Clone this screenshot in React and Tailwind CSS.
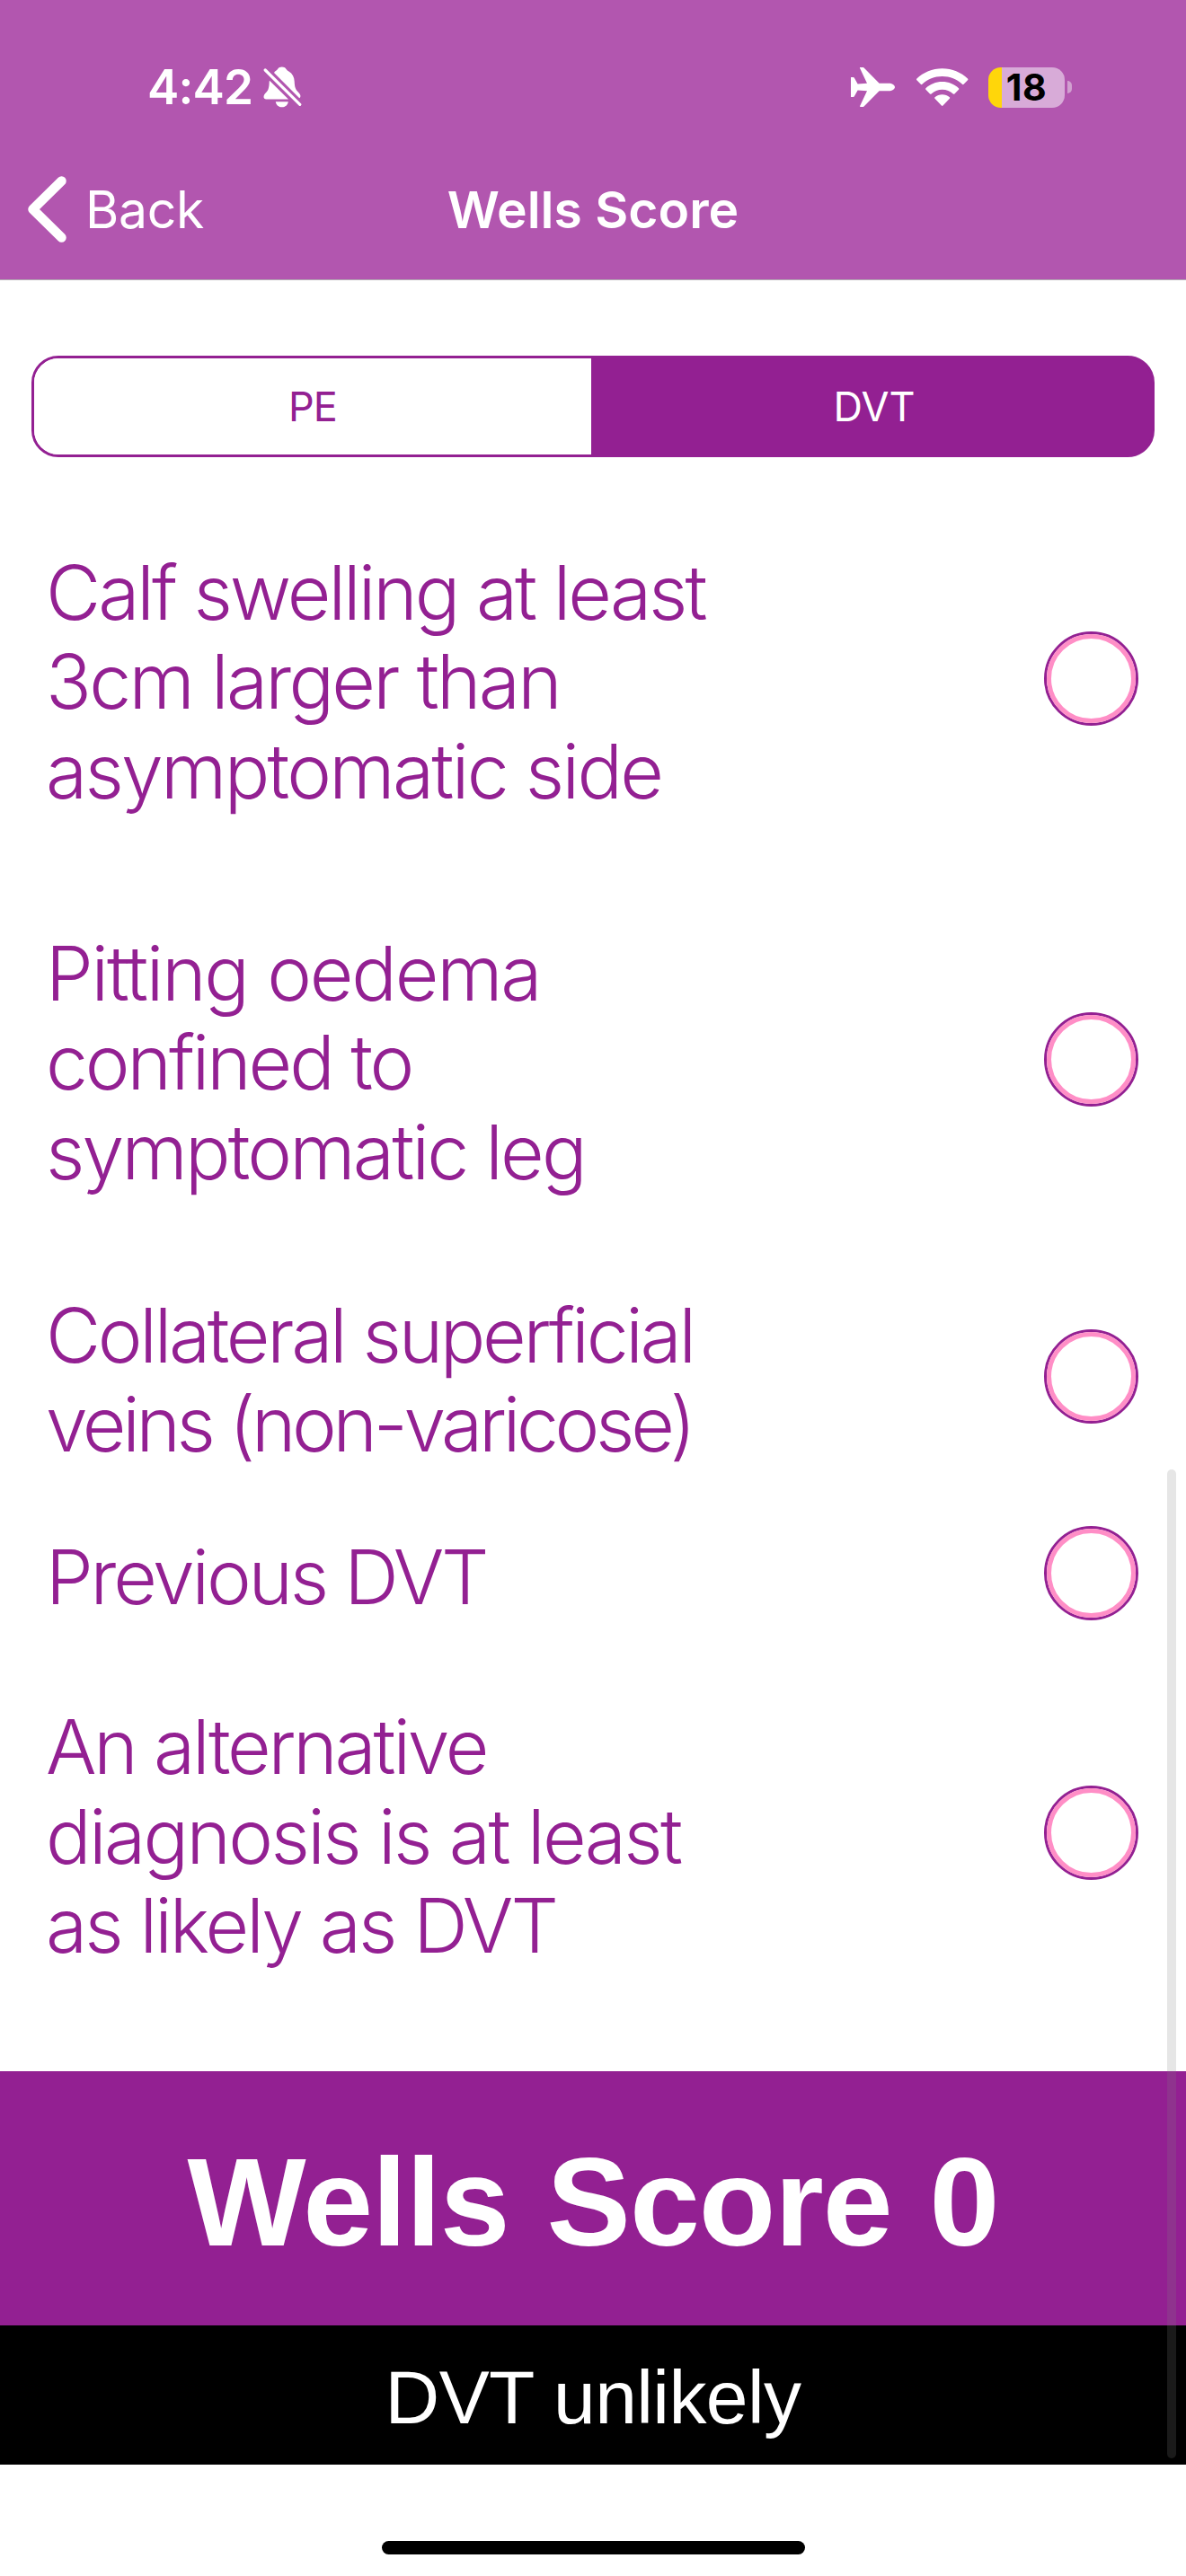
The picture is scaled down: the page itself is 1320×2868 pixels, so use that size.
const CRITERIA = [
  {
    height: "h-[424px]",
    lines: [
      { text: "Calf swelling at least", tracking: "tracking-[-3px]" },
      { text: "3cm larger than", tracking: "tracking-[-2.7px]" },
      { text: "asymptomatic side", tracking: "tracking-[-2.7px]" },
    ],
  },
  {
    height: "h-[424px]",
    lines: [
      { text: "Pitting oedema", tracking: "tracking-[-2.2px]" },
      { text: "confined to", tracking: "tracking-[-3.1px]" },
      { text: "symptomatic leg", tracking: "tracking-[-2.8px]" },
    ],
  },
  {
    height: "h-[282px]",
    lines: [
      { text: "Collateral superficial", tracking: "tracking-[-3.3px]" },
      { text: "veins (non-varicose)", tracking: "tracking-[-4.3px]" },
    ],
  },
  {
    height: "h-[157px]",
    lines: [{ text: "Previous DVT", tracking: "tracking-[-3.2px]" }],
  },
  {
    height: "h-[421px]",
    lines: [
      { text: "An alternative", tracking: "tracking-[-3.2px]" },
      { text: "diagnosis is at least", tracking: "tracking-[-2.6px]" },
      { text: "as likely as DVT", tracking: "tracking-[-2.9px]" },
    ],
  },
];

function BellSlash() {
  return (
    <svg className="ml-[12px] h-[46px] w-[43px]" viewBox="0 0 43 46" fill="none">
      <g fill="white">
        <path d="M13 5.4C14.5 4.6 15.2 3.9 16 2.9C17.2 1.3 18.8.5 20.8.5S24.4 1.3 25.6 2.9C26.4 4 27.2 4.9 28.4 5.6C32.5 8 34.6 12 34.7 16.8C34.9 22.6 35.8 25.4 38.4 27.9C40.3 29.8 41.6 31.4 41.4 33.2C41.3 34.2 40.9 34.9 40.2 35.2L12 6.9Z" />
        <path d="M7 15.7L28 36.4H3.2C1.6 36.4.6 35.4.5 33.9C.4 31.8 2 30.2 3.6 28.5C6 26 6.6 22.6 6.7 16.8Z" />
        <path d="M13.8 39.2H27.8C27.3 42.8 24.5 45.3 20.8 45.3S14.3 42.8 13.8 39.2Z" />
      </g>
      <path d="M2.2 4L40.8 42.3" stroke="white" strokeWidth="3.2" strokeLinecap="round" />
    </svg>
  );
}

function Airplane() {
  return (
    <svg className="h-[44px] w-[49px]" viewBox="0 0 49 44" fill="white">
      <path d="M10.5 0H13C14 0 14.6.4 15.3 1.2L31.6 17.7H42C46 17.7 49 19.8 49 22S46 26.3 42 26.3H31.6L15.3 42.8C14.6 43.6 14 44 13 44H10.5C10 44 9.8 43.7 10.1 43.1L18 26.3L7.6 25.6L4 32C3.7 32.6 3.2 33 2.6 33H0V11H2.6C3.2 11 3.7 11.4 4 12L7.6 18.4L18 17.7L10.1.9C9.8.3 10 0 10.5 0Z" />
    </svg>
  );
}

function Wifi() {
  return (
    <svg className="ml-[24px] h-[43px] w-[58px]" viewBox="0 0 58 43" fill="white">
      <path d="M28.7.3C39.8.3 49.7 4.6 57 11.6C57.5 12.1 57.5 12.7 57 13.2L52.6 17.8C52.1 18.3 51.5 18.3 51 17.8C45.1 12.4 37.3 9.1 28.7 9.1S12.3 12.4 6.4 17.8C5.9 18.3 5.3 18.3 4.8 17.8L.4 13.2C-.1 12.7-.1 12.1.4 11.6C7.7 4.6 17.6.3 28.7.3Z" />
      <path d="M28.7 15C35.8 15 42.2 17.7 47 22.2C47.5 22.7 47.5 23.3 47 23.8L42.4 28.4C41.9 28.9 41.3 28.9 40.8 28.4C37.6 25.5 33.3 23.7 28.7 23.7S19.8 25.5 16.6 28.4C16.1 28.9 15.5 28.9 15 28.4L10.4 23.8C9.9 23.3 9.9 22.7 10.4 22.2C15.2 17.7 21.6 15 28.7 15Z" />
      <path d="M28.7 29.2C31.8 29.2 34.7 30.3 36.9 32.2C37.4 32.7 37.4 33.3 36.9 33.8L29.5 41.6C29 42.1 28.4 42.1 27.9 41.6L20.5 33.8C20 33.3 20 32.7 20.5 32.2C22.7 30.3 25.6 29.2 28.7 29.2Z" />
    </svg>
  );
}

function Battery() {
  return (
    <div className="ml-[22px] flex items-center">
      <div className="flex h-[45px] w-[85px] items-center justify-center rounded-[14px] bg-[linear-gradient(to_right,#ffd60a_15px,#d8abd8_15px)]">
        <span className="text-[41px] font-bold leading-none tracking-[0.5px] text-black">18</span>
      </div>
      <div className="ml-[3px] h-[14px] w-[5px] rounded-r-full bg-[#d1a0d0]" />
    </div>
  );
}

function StatusBar() {
  return (
    <div className="flex h-[155px] items-center justify-between pl-[164px] pr-[127px] pt-[39px]">
      <div className="flex items-center">
        <span className="text-[53px] font-semibold leading-none tracking-[-0.8px]">4:42</span>
        <BellSlash />
      </div>
      <div className="flex items-center">
        <Airplane />
        <Wifi />
        <Battery />
      </div>
    </div>
  );
}

function NavBar() {
  return (
    <div className="grid h-[156px] grid-cols-3 items-center">
      <button className="flex items-center pl-[31px]">
        <svg className="h-[74px] w-[43px]" viewBox="0 0 43 74" fill="none">
          <path d="M37.5 5.5L5.5 37L37.5 68.5" stroke="white" strokeWidth="10.5" strokeLinecap="round" strokeLinejoin="round" />
        </svg>
        <span className="ml-[21px] text-[57px] leading-none tracking-[-0.3px]">Back</span>
      </button>
      <h1 className="text-center text-[57px] font-semibold leading-none">Wells Score</h1>
    </div>
  );
}

function Segments() {
  return (
    <div className="mx-[35px] mt-[84px] flex h-[113px] overflow-hidden rounded-[30px] border-[3px] border-[#932092] bg-[linear-gradient(to_right,#ffffff_50%,#932092_50%)] text-[45px]">
      <button className="flex w-[620px] items-center justify-center bg-white tracking-[-0.8px] text-[#932092]">PE</button>
      <button className="flex flex-1 items-center justify-center bg-[#932092] pl-[6px] text-white">DVT</button>
    </div>
  );
}

export default function App() {
  return (
    <div className="relative flex h-[2868px] w-[1320px] flex-col overflow-hidden bg-white font-['Inter',sans-serif]">
      <header className="h-[312px] border-b border-[#b2aeb2] bg-[#b256af] text-white">
        <StatusBar />
        <NavBar />
      </header>

      <Segments />

      <ul className="mt-[34px] h-[1763px]">
        {CRITERIA.map((item) => (
          <li key={item.lines[0].text} className={`flex items-center justify-between pl-[51px] pr-[53px] ${item.height}`}>
            <p className="whitespace-nowrap pt-[8px] text-[84px] font-light leading-[99.5px] text-[#932092]">
              {item.lines.map((line) => (
                <span key={line.text} className={`block ${line.tracking}`}>
                  {line.text}
                </span>
              ))}
            </p>
            <button className="size-[105px] rounded-full border-[3px] border-[#932092] p-0">
              <span className="block size-full rounded-full border-[5px] border-[#ff8ec6]" />
            </button>
          </li>
        ))}
      </ul>

      <div className="flex h-[283px] items-center justify-center bg-[#932092] pt-[9px] font-['Liberation_Sans',sans-serif] text-[140px] font-bold leading-none tracking-[-1px] text-white">
        <p className="[word-spacing:4px]">Wells Score 0</p>
      </div>
      <div className="flex h-[155px] items-center justify-center bg-black pt-[5px] font-['Liberation_Sans',sans-serif] text-[84px] leading-none tracking-[-0.6px] text-white">
        DVT unlikely
      </div>

      <div className="mx-auto mt-[85px] h-[15px] w-[471px] rounded-full bg-black" />

      <div className="absolute right-[11px] top-[1636px] h-[1101px] w-[10px] rounded-full bg-[#808080]/20" />
    </div>
  );
}
